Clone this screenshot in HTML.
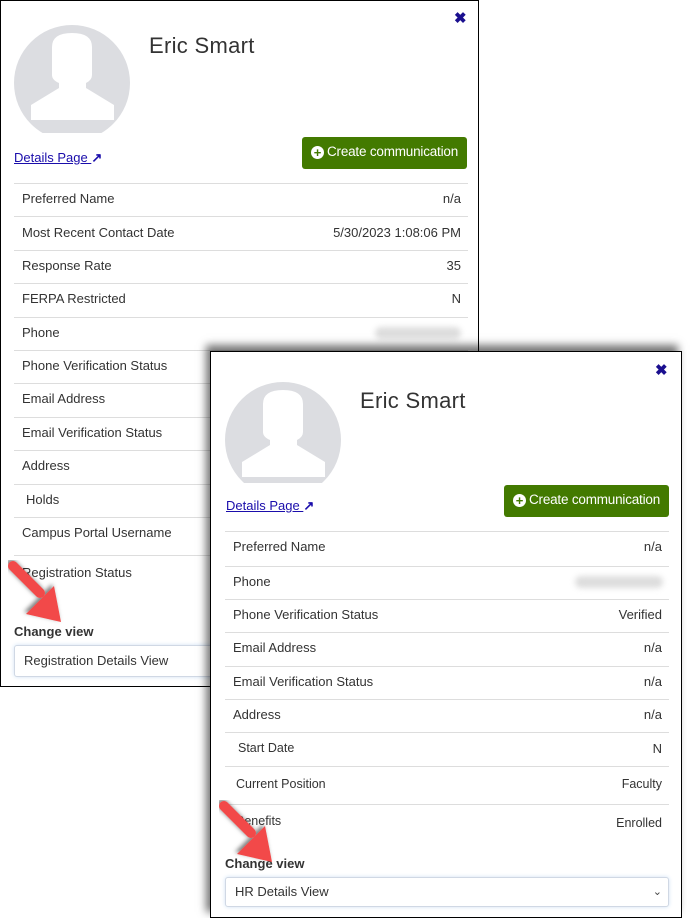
<!DOCTYPE html>
<html><head><meta charset="utf-8"><style>
*{box-sizing:border-box;margin:0;padding:0}
body{width:691px;height:918px;background:#fff;position:relative;overflow:hidden;font-family:"Liberation Sans",Arial,sans-serif;color:#333;font-size:13px}
.p{position:absolute;background:#fff;border:1.5px solid #000}
.a{position:absolute;white-space:nowrap}
.l{position:absolute;height:1px;background:#ddd}
.v{position:absolute;white-space:nowrap;text-align:right}
.name{font-size:22px;color:#333;font-weight:300;letter-spacing:0.3px}
.x{font-size:15px;color:#1a0f8f;font-weight:bold}
.lnk{color:#1a0dab;text-decoration:underline;font-size:13px}
.btn{position:absolute;background:#437a00;color:#fff;border-radius:3px;font-size:13.5px;text-align:center;letter-spacing:-0.2px}
.pl{display:inline-block;width:13px;height:13px;border-radius:50%;background:#fff;color:#437a00;font-weight:bold;font-size:13px;line-height:13px;text-align:center;vertical-align:-1px;margin-right:3px}
.sel{position:absolute;border:1px solid #d0d8e4;border-radius:3px;box-shadow:0 0 4px #cfe0f5;background:#fff;font-size:13px;padding-left:9px}
.cv{position:absolute;font-weight:bold;font-size:13px}
.blur{position:absolute;height:12px;background:#ddd;border-radius:6px;filter:blur(3px)}
</style></head><body>

<div class="p" style="left:0;top:0;width:479px;height:687px"></div>
<div class="a x" style="left:454px;top:9px">✖</div>
<svg style="position:absolute;left:14px;top:25px" width="117" height="109"><defs><clipPath id="c1"><rect width="117" height="108"/></clipPath></defs><g clip-path="url(#c1)"><circle cx="58" cy="58" r="58" fill="#dcdde1"/><path d="M38 22 Q38 8 58 8 Q78 8 78 22 L78 50 Q78 55 72 58 L72 63 L100 80 L100 95 L17 95 L17 80 L45 63 L45 58 Q38 55 38 50 Z" fill="#fff"/></g></svg>
<div class="a name" style="left:149px;top:33px">Eric Smart</div>
<div class="a lnk" style="left:14px;top:150px">Details Page <span style="font-weight:bold;display:inline-block">↗</span></div>
<div class="btn" style="left:302px;top:137px;width:165px;height:32px;line-height:30px"><span class="pl">+</span>Create communication</div>
<div class="l" style="left:14px;width:454px;top:183px"></div>
<div class="l" style="left:14px;width:454px;top:216px"></div>
<div class="l" style="left:14px;width:454px;top:250px"></div>
<div class="l" style="left:14px;width:454px;top:283px"></div>
<div class="l" style="left:14px;width:454px;top:317px"></div>
<div class="l" style="left:14px;width:454px;top:350px"></div>
<div class="l" style="left:14px;width:200px;top:383px"></div>
<div class="l" style="left:14px;width:200px;top:417px"></div>
<div class="l" style="left:14px;width:200px;top:450px"></div>
<div class="l" style="left:14px;width:200px;top:484px"></div>
<div class="l" style="left:14px;width:200px;top:517px"></div>
<div class="l" style="left:14px;width:200px;top:555px"></div>
<div class="a" style="left:22px;top:191px">Preferred Name</div><div class="v" style="right:230px;top:191px">n/a</div>
<div class="a" style="left:22px;top:225px">Most Recent Contact Date</div><div class="v" style="right:230px;top:225px">5/30/2023 1:08:06 PM</div>
<div class="a" style="left:22px;top:258px">Response Rate</div><div class="v" style="right:230px;top:258px">35</div>
<div class="a" style="left:22px;top:291px">FERPA Restricted</div><div class="v" style="right:230px;top:291px">N</div>
<div class="a" style="left:22px;top:325px">Phone</div><div class="blur" style="left:375px;top:327px;width:86px"></div>
<div class="a" style="left:22px;top:358px">Phone Verification Status</div>
<div class="a" style="left:22px;top:391px">Email Address</div>
<div class="a" style="left:22px;top:425px">Email Verification Status</div>
<div class="a" style="left:22px;top:458px">Address</div>
<div class="a" style="left:26px;top:492px">Holds</div>
<div class="a" style="left:22px;top:525px">Campus Portal Username</div>
<div class="a" style="left:22px;top:565px">Registration Status</div>
<div class="cv" style="left:14px;top:624px">Change view</div>
<div class="sel" style="left:14px;top:645px;width:220px;height:32px;line-height:30px">Registration Details View</div>

<div class="p" style="left:210px;top:351px;width:472px;height:567px;box-shadow:-4px -6px 8px rgba(0,0,0,0.55)"></div>
<div class="a x" style="left:655px;top:361px">✖</div>
<svg style="position:absolute;left:225px;top:380px" width="117" height="104"><defs><clipPath id="c2"><rect width="117" height="103"/></clipPath></defs><g clip-path="url(#c2)"><circle cx="58" cy="60" r="58" fill="#dcdde1"/><path d="M38 24 Q38 10 58 10 Q78 10 78 24 L78 52 Q78 57 72 60 L72 65 L100 82 L100 97 L17 97 L17 82 L45 65 L45 60 Q38 57 38 52 Z" fill="#fff"/></g></svg>
<div class="a name" style="left:360px;top:388px">Eric Smart</div>
<div class="a lnk" style="left:226px;top:498px">Details Page <span style="font-weight:bold;display:inline-block">↗</span></div>
<div class="btn" style="left:504px;top:485px;width:165px;height:32px;line-height:30px"><span class="pl">+</span>Create communication</div>
<div class="l" style="left:225px;width:444px;top:531px"></div>
<div class="l" style="left:225px;width:444px;top:566px"></div>
<div class="l" style="left:225px;width:444px;top:599px"></div>
<div class="l" style="left:225px;width:444px;top:632px"></div>
<div class="l" style="left:225px;width:444px;top:666px"></div>
<div class="l" style="left:225px;width:444px;top:699px"></div>
<div class="l" style="left:225px;width:444px;top:732px"></div>
<div class="l" style="left:225px;width:444px;top:766px"></div>
<div class="l" style="left:225px;width:444px;top:804px"></div>
<div class="a" style="left:233px;top:539px">Preferred Name</div><div class="v" style="right:29px;top:539px">n/a</div>
<div class="a" style="left:233px;top:574px">Phone</div><div class="blur" style="left:575px;top:576px;width:88px"></div>
<div class="a" style="left:233px;top:607px">Phone Verification Status</div><div class="v" style="right:29px;top:607px">Verified</div>
<div class="a" style="left:233px;top:640px">Email Address</div><div class="v" style="right:29px;top:640px">n/a</div>
<div class="a" style="left:233px;top:674px">Email Verification Status</div><div class="v" style="right:29px;top:674px">n/a</div>
<div class="a" style="left:233px;top:707px">Address</div><div class="v" style="right:29px;top:707px">n/a</div>
<div class="a" style="left:238px;top:741px;font-size:12.5px">Start Date</div><div class="v" style="right:29px;top:741px">N</div>
<div class="a" style="left:236px;top:777px;font-size:12.5px">Current Position</div><div class="v" style="right:29px;top:777px;font-size:12.5px">Faculty</div>
<div class="a" style="left:236px;top:814px;font-size:12.5px">Benefits</div><div class="v" style="right:29px;top:816px;font-size:12.5px">Enrolled</div>
<div class="cv" style="left:225px;top:856px">Change view</div>
<div class="sel" style="left:225px;top:877px;width:444px;height:30px;line-height:28px">HR Details View<span style="position:absolute;right:6px;top:0;font-size:11px;color:#444">&#8964;</span></div>

<svg style="position:absolute;left:0;top:550px" width="80" height="80"><defs><filter id="s"><feDropShadow dx="-2" dy="-2" stdDeviation="2" flood-opacity="0.5"/></filter></defs><g filter="url(#s)" fill="#f24848"><line x1="13" y1="16" x2="40" y2="43" stroke="#f24848" stroke-width="10" stroke-linecap="round"/><polygon points="61,72 26,64 54,36"/></g></svg>
<svg style="position:absolute;left:211px;top:790px" width="80" height="80"><g filter="url(#s)" fill="#f24848"><line x1="13" y1="16" x2="40" y2="43" stroke="#f24848" stroke-width="10" stroke-linecap="round"/><polygon points="61,72 26,64 54,36"/></g></svg>
</body></html>
